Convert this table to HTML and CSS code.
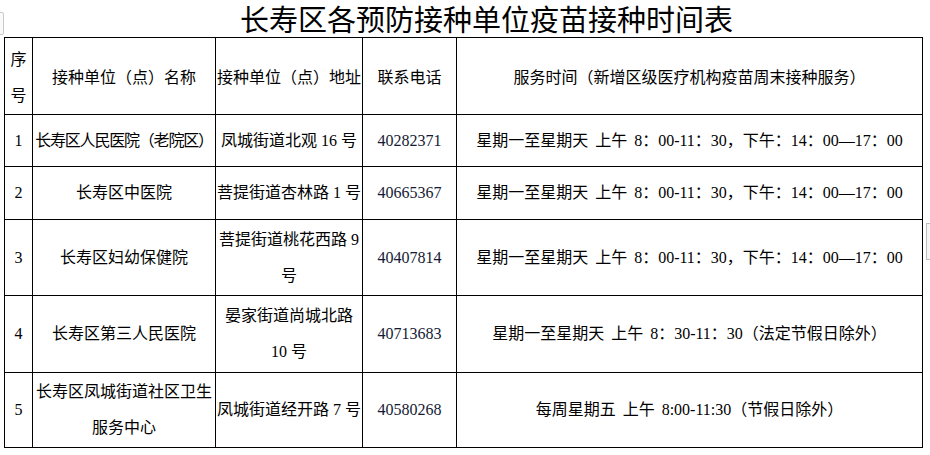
FILE: index.html
```html
<!DOCTYPE html>
<html lang="zh-CN">
<head>
<meta charset="utf-8">
<title>长寿区各预防接种单位疫苗接种时间表</title>
<link rel="stylesheet" href="styles.css">
</head>
<body>
<div class="page">
  <h1 class="title">长寿区各预防接种单位疫苗接种时间表</h1>
  <div class="table-wrap">
    <span class="move-handle"></span>
    <table class="schedule">
      <colgroup>
        <col class="c-no">
        <col class="c-name">
        <col class="c-addr">
        <col class="c-tel">
        <col class="c-time">
      </colgroup>
      <thead>
        <tr class="r-head">
          <th>序号</th>
          <th>接种单位（点）名称</th>
          <th>接种单位（点）地址</th>
          <th>联系电话</th>
          <th>服务时间（新增区级医疗机构疫苗周末接种服务）</th>
        </tr>
      </thead>
      <tbody>
        <tr class="r1">
          <td>1</td>
          <td class="tight">长寿区人民医院（老院区）</td>
          <td>凤城街道北观 16 号</td>
          <td class="num">40282371</td>
          <td class="time">星期一至星期天 上午 8：00-11：30，下午：14：00—17：00</td>
        </tr>
        <tr class="r2">
          <td>2</td>
          <td>长寿区中医院</td>
          <td>菩提街道杏林路 1 号</td>
          <td class="num">40665367</td>
          <td class="time">星期一至星期天 上午 8：00-11：30，下午：14：00—17：00</td>
        </tr>
        <tr class="r3">
          <td>3</td>
          <td>长寿区妇幼保健院</td>
          <td>菩提街道桃花西路 9 号</td>
          <td class="num">40407814</td>
          <td class="time">星期一至星期天 上午 8：00-11：30，下午：14：00—17：00</td>
        </tr>
        <tr class="r4">
          <td>4</td>
          <td>长寿区第三人民医院</td>
          <td>晏家街道尚城北路 10 号</td>
          <td class="num">40713683</td>
          <td class="time">星期一至星期天 上午 8：30-11：30（法定节假日除外）</td>
        </tr>
        <tr class="r5">
          <td>5</td>
          <td>长寿区凤城街道社区卫生服务中心</td>
          <td>凤城街道经开路 7 号</td>
          <td class="num">40580268</td>
          <td class="time">每周星期五 上午 8:00-11:30（节假日除外）</td>
        </tr>
      </tbody>
    </table>
    <span class="side-mark"></span>
  </div>
</div>
</body>
</html>
```

FILE: styles.css
```css
html, body {
  margin: 0;
  padding: 0;
  background: #fff;
}

.page {
  width: 930px;
  height: 455px;
  overflow: hidden;
  position: relative;
}

.title {
  margin: 0;
  padding-left: 240px;
  height: 37px;
  font-family: "Noto Sans CJK SC", "Noto Sans", sans-serif;
  font-size: 29px;
  font-weight: 400;
  line-height: 37px;
  color: #000;
  white-space: nowrap;
}

.table-wrap {
  position: relative;
  padding-left: 4px;
}

.schedule {
  border-collapse: collapse;
  table-layout: fixed;
  width: 919px;
  font-family: "Liberation Serif", "Noto Sans CJK SC", serif;
  font-size: 16px;
  line-height: 36px;
  color: #000;
}

.c-no { width: 28px; }
.c-name { width: 183px; }
.c-addr { width: 147px; }
.c-tel { width: 94px; }
.c-time { width: 466px; }

.schedule th,
.schedule td {
  border: 1px solid #000;
  padding: 0;
  text-align: center;
  vertical-align: middle;
  font-weight: 400;
}

.schedule th {
  font-family: "Noto Sans CJK SC", sans-serif;
}

.r-head { height: 77px; }
.r1 { height: 52px; }
.r2 { height: 53px; }
.r3 { height: 76px; }
.r4 { height: 77px; }
.r5 { height: 75px; }

.tight {
  white-space: nowrap;
  letter-spacing: -1.2px;
}

.time {
  word-spacing: 3px;
}

.num {
  color: #141a33;
}

.move-handle {
  position: absolute;
  left: -9px;
  top: -25px;
  width: 11px;
  height: 21px;
  border: 1px solid #c9c9c9;
  border-radius: 2px;
  background: #fafafa;
}

.side-mark {
  position: absolute;
  left: 926px;
  top: 186px;
  width: 8px;
  height: 35px;
  border: 1px solid #bdbdbd;
  border-right: none;
  background: #f6f6f6;
}
```
